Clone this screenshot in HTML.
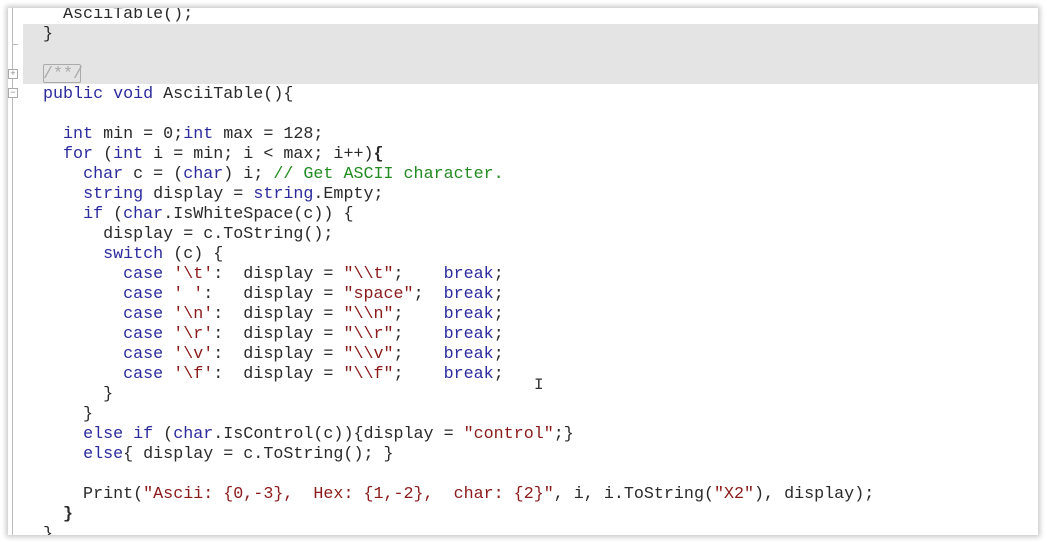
<!DOCTYPE html>
<html><head><meta charset="utf-8"><style>
html,body{margin:0;padding:0;width:1047px;height:542px;background:#fff;overflow:hidden}
#win{position:absolute;left:8px;top:8px;width:1030px;height:527px;background:#fff;overflow:hidden;box-shadow:0 0 5px 2px rgba(0,0,0,0.22)}
#band{position:absolute;left:15px;top:16px;right:0;height:60px;background:#e4e4e4}
#gut{position:absolute;left:4px;top:0;width:1px;height:527px;background:#bbb}
.tick{position:absolute;left:4px;width:6px;height:1px;background:#bbb}
.fold{position:absolute;left:0;width:8px;height:8px;border:1px solid #aaa;background:#fff;font:9px/8px "Liberation Mono",monospace;color:#888;text-align:center}
#box{position:absolute;left:35px;top:56px;width:38px;height:19px;border:1px solid #aaa;border-radius:2px;box-sizing:border-box}
pre{position:absolute;left:35px;top:-3px;margin:0;font:16.7px/20px "Liberation Mono","Courier New",monospace;color:#2a2a2a}
.k{color:#2b2b9e}.s{color:#8b1a1a}.c{color:#228b22}.g{color:#aaa}
</style></head><body>
<div id="win">
<div id="band"></div>
<div id="gut"></div>
<div class="tick" style="top:36px"></div>
<div class="fold" style="top:61px">+</div>
<div class="fold" style="top:80px">−</div>
<div id="box"></div>
<pre>  AsciiTable();
}

<span class="g">/**/</span>
<span class="k">public void</span> AsciiTable(){

  <span class="k">int</span> min = 0;<span class="k">int</span> max = 128;
  <span class="k">for</span> (<span class="k">int</span> i = min; i &lt; max; i++)<b>{</b>
    <span class="k">char</span> c = (<span class="k">char</span>) i; <span class="c">// Get ASCII character.</span>
    <span class="k">string</span> display = <span class="k">string</span>.Empty;
    <span class="k">if</span> (<span class="k">char</span>.IsWhiteSpace(c)) {
      display = c.ToString();
      <span class="k">switch</span> (c) {
        <span class="k">case</span> <span class="s">'\t'</span>:  display = <span class="s">"\\t"</span>;    <span class="k">break</span>;
        <span class="k">case</span> <span class="s">' '</span>:   display = <span class="s">"space"</span>;  <span class="k">break</span>;
        <span class="k">case</span> <span class="s">'\n'</span>:  display = <span class="s">"\\n"</span>;    <span class="k">break</span>;
        <span class="k">case</span> <span class="s">'\r'</span>:  display = <span class="s">"\\r"</span>;    <span class="k">break</span>;
        <span class="k">case</span> <span class="s">'\v'</span>:  display = <span class="s">"\\v"</span>;    <span class="k">break</span>;
        <span class="k">case</span> <span class="s">'\f'</span>:  display = <span class="s">"\\f"</span>;    <span class="k">break</span>;
      }
    }
    <span class="k">else if</span> (<span class="k">char</span>.IsControl(c)){display = <span class="s">"control"</span>;}
    <span class="k">else</span>{ display = c.ToString(); }

    Print(<span class="s">"Ascii: {0,-3},  Hex: {1,-2},  char: {2}"</span>, i, i.ToString(<span class="s">"X2"</span>), display);
  <b>}</b>
}</pre>
<div style="position:absolute;left:526px;top:368px;font:16px 'Liberation Mono',monospace;color:#333">I</div>
</div>
</body></html>
